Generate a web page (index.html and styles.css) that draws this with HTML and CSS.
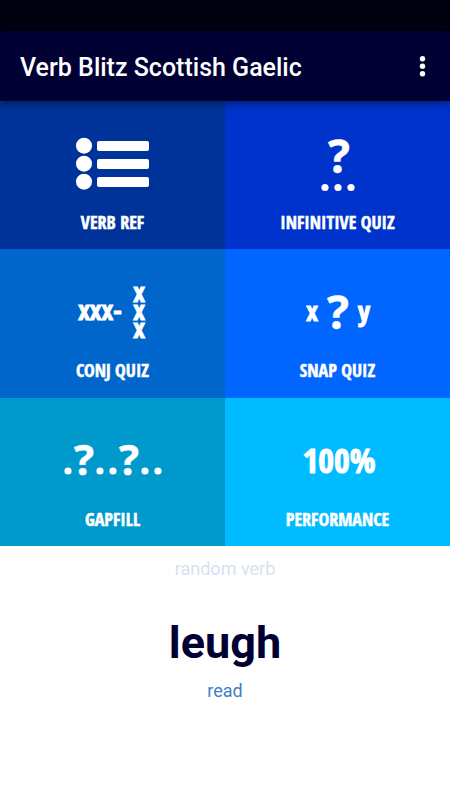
FILE: index.html
```html
<!DOCTYPE html>
<html lang="en">
<head>
    <meta charset="UTF-8">
    <meta name="viewport" content="width=device-width, initial-scale=1.0">
    <title>Verb Blitz Scottish Gaelic</title>
    <link rel="stylesheet" href="styles.css">
</head>
<body>
    <div class="status-bar"></div>
    <header class="app-bar">
        <h1 class="app-title">Verb Blitz Scottish Gaelic</h1>
        <button class="menu-button" type="button" aria-label="More options">
            <svg width="8" height="24" viewBox="0 0 8 24" fill="currentColor">
                <circle cx="4.5" cy="4.7" r="2.7"/>
                <circle cx="4.5" cy="12.2" r="2.7"/>
                <circle cx="4.5" cy="19.7" r="2.7"/>
            </svg>
        </button>
    </header>

    <main>
        <nav class="tiles">
            <a href="#" class="tile verb-ref">
                <svg class="tile-icon" viewBox="0 0 120 64">
                    <circle cx="31" cy="14.7" r="8"/>
                    <circle cx="31" cy="32.7" r="8"/>
                    <circle cx="31" cy="50.7" r="8"/>
                    <rect x="44" y="10" width="52" height="10" rx="2"/>
                    <rect x="44" y="28" width="52" height="10" rx="2"/>
                    <rect x="44" y="46" width="52" height="10" rx="2"/>
                </svg>
                <span class="tile-label">VERB REF</span>
            </a>
            <a href="#" class="tile infinitive">
                <svg class="tile-icon" viewBox="0 0 120 64">
                    <text class="mark" x="61" y="42">?</text>
                    <circle cx="47" cy="56.5" r="3.6"/>
                    <circle cx="60" cy="56.5" r="3.6"/>
                    <circle cx="73" cy="56.5" r="3.6"/>
                </svg>
                <span class="tile-label">INFINITIVE QUIZ</span>
            </a>
            <a href="#" class="tile conj">
                <svg class="tile-icon" viewBox="0 0 120 64">
                    <text class="letter" x="47" y="41">xxx-</text>
                    <text class="letter" x="86" y="23">x</text>
                    <text class="letter" x="86" y="41">x</text>
                    <text class="letter" x="86" y="59">x</text>
                </svg>
                <span class="tile-label">CONJ QUIZ</span>
            </a>
            <a href="#" class="tile snap">
                <svg class="tile-icon" viewBox="0 0 120 64">
                    <text class="letter" x="34" y="42">x</text>
                    <text class="mark" x="60" y="50">?</text>
                    <text class="letter" x="86" y="42">y</text>
                </svg>
                <span class="tile-label">SNAP QUIZ</span>
            </a>
            <a href="#" class="tile gapfill">
                <svg class="tile-icon" viewBox="0 0 120 64">
                    <circle cx="15" cy="43" r="3.6"/>
                    <text class="mark small" x="31" y="47">?</text>
                    <circle cx="47" cy="43" r="3.6"/>
                    <circle cx="60" cy="43" r="3.6"/>
                    <text class="mark small" x="76" y="47">?</text>
                    <circle cx="92" cy="43" r="3.6"/>
                    <circle cx="105" cy="43" r="3.6"/>
                </svg>
                <span class="tile-label">GAPFILL</span>
            </a>
            <a href="#" class="tile performance">
                <svg class="tile-icon" viewBox="0 0 120 64">
                    <text class="score" x="61" y="45">100%</text>
                </svg>
                <span class="tile-label">PERFORMANCE</span>
            </a>
        </nav>

        <section class="random-verb">
            <p class="random-heading">random verb</p>
            <h2 class="verb" lang="gd">leugh</h2>
            <p class="translation">read</p>
        </section>
    </main>
</body>
</html>
```

FILE: styles.css
```css
/* Base Styles */
body {
    margin: 0;
    font-family: Roboto, sans-serif;
    background-color: #fff;
}

/* Top bars */
.status-bar {
    height: 31px;
    background-color: #00000f;
}

.app-bar {
    position: relative;
    display: flex;
    justify-content: space-between;
    align-items: center;
    height: 70px;
    padding: 0 20px;
    box-sizing: border-box;
    background-color: #000033;
    color: #fff;
    box-shadow: 0 2px 8px rgba(0, 0, 0, 0.5);
}

.app-title {
    margin: 0;
    padding-top: 2px;
    font-size: 25px;
    font-weight: 500;
}

.menu-button {
    display: flex;
    padding: 4px;
    border: 0;
    background: none;
    color: inherit;
    cursor: pointer;
}

/* Tiles */
.tiles {
    display: grid;
    grid-template-columns: 1fr 1fr;
    grid-template-rows: 148px 149px 148px;
}

.tile {
    display: flex;
    flex-direction: column;
    align-items: center;
    gap: 17px;
    padding-top: 30px;
    color: #fff;
    text-decoration: none;
    font-family: "Liberation Sans Narrow", "Open Sans Condensed", "Open Sans", sans-serif;
    font-weight: 700;
}

.tile-icon {
    width: 120px;
    height: 64px;
    fill: currentColor;
    text-anchor: middle;
    overflow: visible;
}

.tile-label {
    font-size: 18px;
    line-height: 20px;
    -webkit-text-stroke: 0.5px currentColor;
}

.mark {
    font-family: "Open Sans", sans-serif;
    font-size: 46px;
    stroke: currentColor;
    stroke-width: 0.5;
}

.mark.small {
    font-size: 42px;
}

.letter {
    font-size: 27px;
    stroke: currentColor;
    stroke-width: 1;
}

.score {
    font-size: 34px;
    stroke: currentColor;
    stroke-width: 1;
}

.verb-ref {
    background-color: #003399;
}

.infinitive {
    background-color: #0033cc;
}

.conj {
    background-color: #0066cc;
}

.snap {
    background-color: #0066ff;
}

.gapfill {
    background-color: #0099cc;
}

.performance {
    background-color: #00bbff;
}

/* Random verb */
.random-verb {
    padding-top: 12px;
    text-align: center;
}

.random-heading,
.translation {
    margin: 0;
    font-size: 18px;
    line-height: 22px;
}

.random-heading {
    color: #d5e3f3;
}

.verb {
    margin: 36px 0 10px;
    font-size: 45px;
    line-height: 54px;
    color: #000033;
}

.translation {
    color: #4080c0;
}
```
